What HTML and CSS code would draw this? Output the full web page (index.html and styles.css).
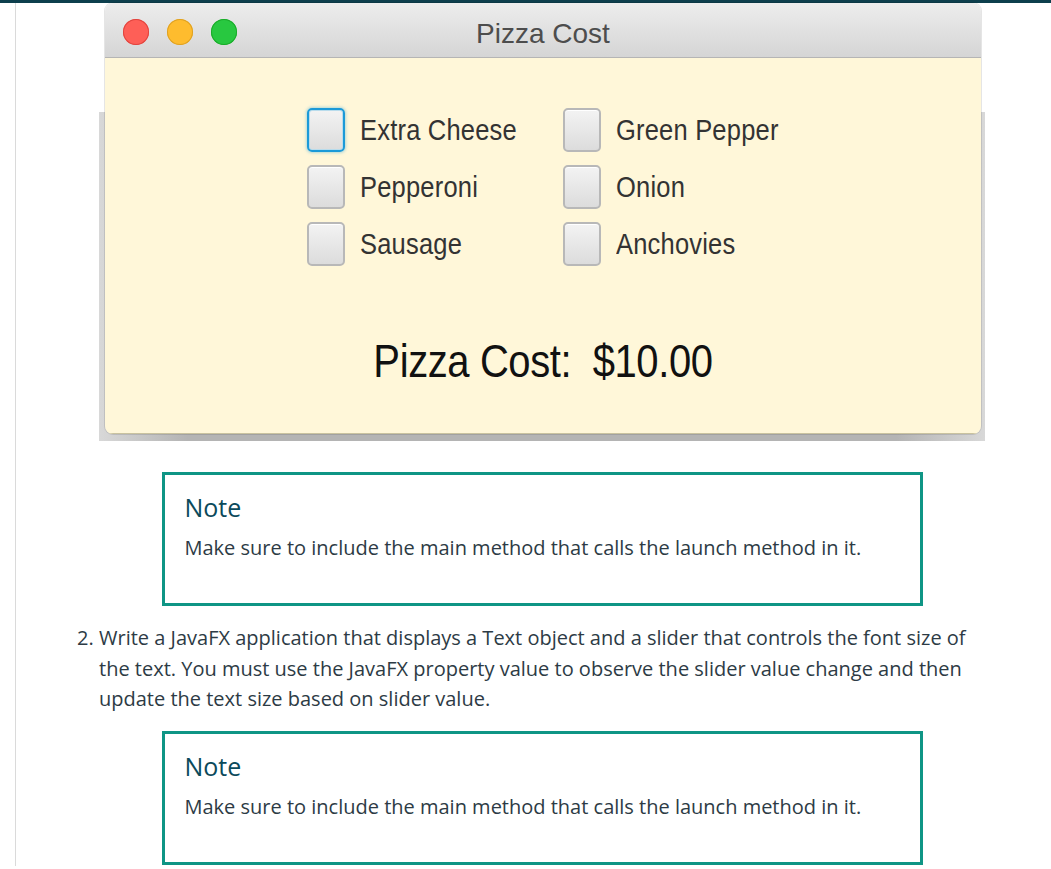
FILE: index.html
```html
<!DOCTYPE html>
<html lang="en">
<head>
<meta charset="utf-8">
<title>Pizza Cost</title>
<link rel="stylesheet" href="styles.css">
</head>
<body>
<div class="topbar"></div>
<div class="page">
  <div class="content">
    <div class="shot">
      <div class="window">
        <div class="titlebar">
          <div class="lights">
            <span class="light red"></span>
            <span class="light yellow"></span>
            <span class="light green"></span>
          </div>
          <div class="title">Pizza Cost</div>
          <div></div>
        </div>
        <div class="wbody">
          <div class="opts">
            <div class="opt"><span class="box focus"></span><span class="lbl">Extra Cheese</span></div>
            <div class="opt"><span class="box"></span><span class="lbl">Green Pepper</span></div>
            <div class="opt"><span class="box"></span><span class="lbl">Pepperoni</span></div>
            <div class="opt"><span class="box"></span><span class="lbl">Onion</span></div>
            <div class="opt"><span class="box"></span><span class="lbl">Sausage</span></div>
            <div class="opt"><span class="box"></span><span class="lbl">Anchovies</span></div>
          </div>
          <div class="cost"><span class="cost-text">Pizza Cost:&nbsp; $10.00</span></div>
        </div>
      </div>
    </div>

    <div class="note">
      <h4 class="note-title">Note</h4>
      <p class="note-text">Make sure to include the main method that calls the launch method in it.</p>
    </div>

    <ol class="tasks" start="2">
      <li>Write a JavaFX application that displays a Text object and a slider that controls the font size of the text. You must use the JavaFX property value to observe the slider value change and then update the text size based on slider value.</li>
    </ol>

    <div class="note note-second">
      <h4 class="note-title">Note</h4>
      <p class="note-text">Make sure to include the main method that calls the launch method in it.</p>
    </div>
  </div>
</div>
</body>
</html>
```

FILE: styles.css
```css
* { box-sizing: border-box; }
html { overflow: hidden; }
html, body { margin: 0; padding: 0; background: #fff; }
body { font-family: "Open Sans", "Liberation Sans", sans-serif; color: #2d3b45; }

.topbar { height: 3px; background: #0d3f4d; }

.page {
  margin-left: 15px;
  border-left: 1px solid #dadada;
  height: 863px;
  padding-left: 83px;
}
.content { width: 886px; }

/* screenshot of the JavaFX window */
.shot {
  padding: 0 4px 7px 6px;
  background:
    linear-gradient(#fff, #fff) top / 100% 109px no-repeat,
    linear-gradient(to right, #d8d8d8, #b4b4b4 10%, #b4b4b4 90%, #d8d8d8);
}
.window {
  border-radius: 8px;
  overflow: hidden;
  box-shadow: 0 0 0 1px rgba(0, 0, 0, 0.10);
}
.titlebar {
  height: 55px;
  display: grid;
  grid-template-columns: 1fr auto 1fr;
  align-items: center;
  background: linear-gradient(#ededed, #d5d5d5);
  border-bottom: 1px solid #b5b5b5;
}
.lights { display: flex; gap: 18px; padding-left: 18px; margin-top: 3px; }
.light { width: 26px; height: 26px; border-radius: 50%; }
.red { background: #fe5f57; box-shadow: inset 0 0 0 1px #e0443e; }
.yellow { background: #febc2e; box-shadow: inset 0 0 0 1px #dea123; }
.green { background: #28c840; box-shadow: inset 0 0 0 1px #1aab29; }
.title {
  font-family: "Liberation Sans", Arial, sans-serif;
  font-size: 28px;
  line-height: 49px;
  padding-top: 6px;
  color: #4d4d4d;
}
.wbody {
  height: 376px;
  background: #fff7d9;
  padding-top: 50px;
  box-shadow: inset 0 -1px 0 #c9c29f;
}
.opts {
  margin-left: 202px;
  display: grid;
  grid-template-columns: 256px auto;
  row-gap: 13px;
}
.opt {
  display: flex;
  align-items: center;
  gap: 15px;
  height: 44px;
  font-family: "Liberation Sans", Arial, sans-serif;
  font-size: 25.5px;
  letter-spacing: 0.2px;
  color: #333;
}
.lbl {
  display: inline-block;
  transform: scaleY(1.16);
}
.box {
  width: 38px;
  height: 44px;
  flex: none;
  border: 2px solid #b8b8b8;
  border-radius: 5px;
  background: linear-gradient(#f3f3f3, #dcdcdc);
  box-shadow: inset 0 1px 0 #fff;
}
.box.focus {
  border-color: #1b9ad8;
  box-shadow: 0 0 3px 1px rgba(27, 154, 216, 0.35), inset 0 0 0 1px #b9dcec;
}
.cost {
  margin-top: 72px;
  text-align: center;
  font-family: "Liberation Sans", Arial, sans-serif;
  font-size: 40px;
  line-height: 46px;
  letter-spacing: -0.4px;
  color: #111;
}
.cost-text {
  display: inline-block;
  transform: scaleY(1.16);
}

/* notes */
.note {
  width: 761px;
  margin: 31px auto 0;
  border: 3px solid #0f9585;
  padding: 17px 20px 40px;
}
.note-second { margin-top: 16px; }
.note-title {
  margin: 0;
  font-size: 25px;
  font-weight: 400;
  line-height: 31.25px;
  color: #0b4a5b;
}
.note-text {
  margin: 10px 0 0;
  font-size: 20px;
  line-height: 30px;
}

.tasks {
  margin: 17px 0 0;
  padding: 0;
}
.tasks li {
  font-size: 20px;
  line-height: 30.5px;
}
```
